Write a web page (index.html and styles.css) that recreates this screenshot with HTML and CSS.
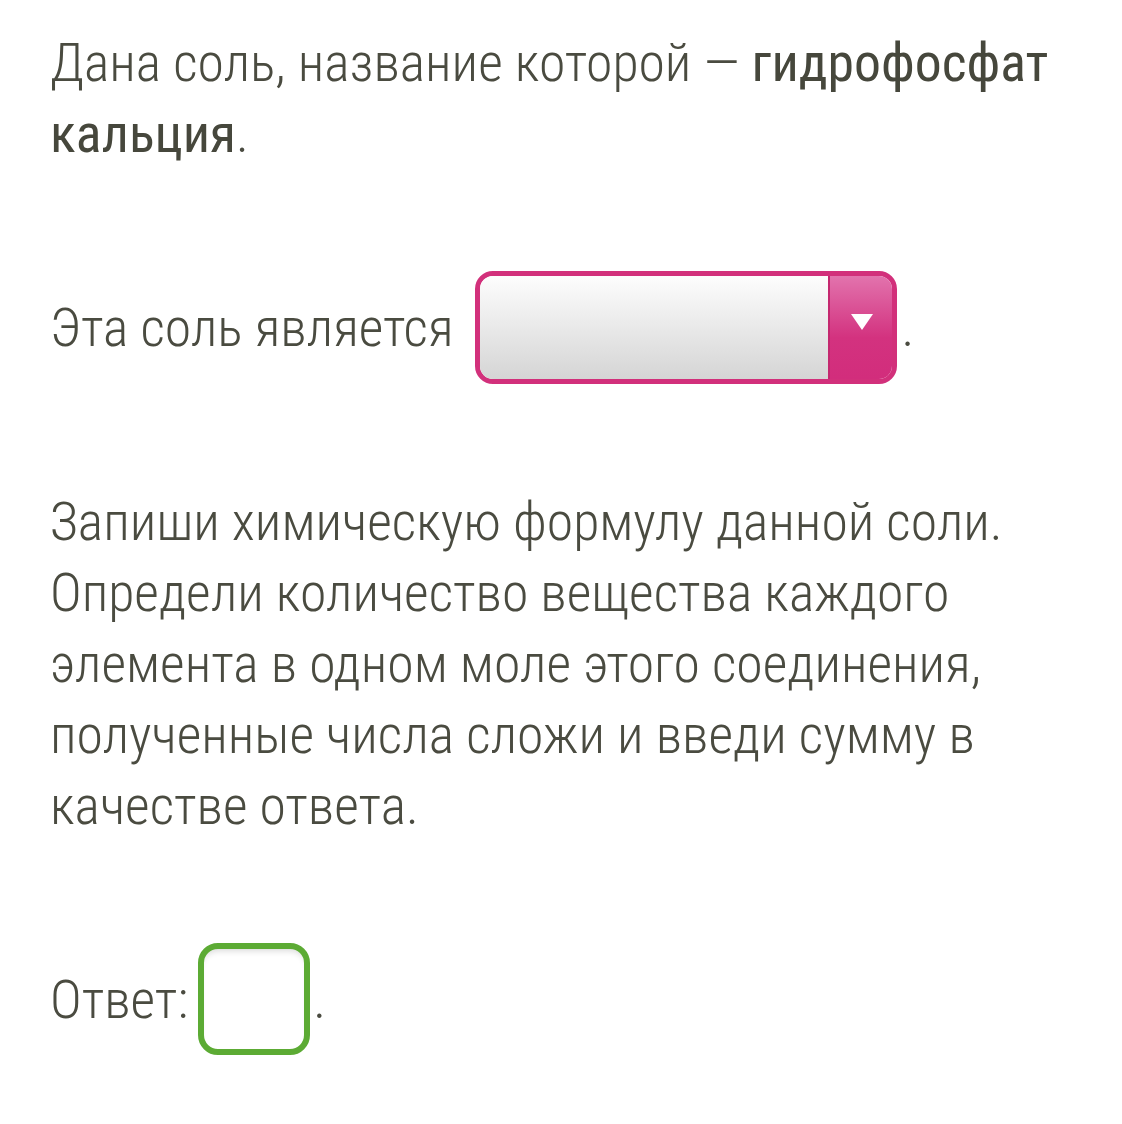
FILE: index.html
```html
<!DOCTYPE html>
<html lang="ru">
<head>
    <meta charset="utf-8" />
    <title>Гидрофосфат кальция</title>
    <link rel="stylesheet" href="styles.css">
</head>
<body>
    <div class="task">
        <p class="txt">Дана соль, название которой — <b>гидрофосфат кальция</b>.</p>

        <p class="txt">Эта соль является<span class="select"><span class="field"></span><span class="arrow"><span class="tri"></span></span></span>.</p>

        <p class="txt">Запиши химическую формулу данной соли. Определи количество вещества каждого элемента в одном моле этого соединения, полученные числа сложи и введи сумму в качестве ответа.</p>

        <p class="txt">Ответ:<span class="answer"></span>.</p>
    </div>
</body>
</html>
```
FILE: styles.css
```css
body,
div,
p,
span {
    margin: 0;
    padding: 0
}

body {
    background: #fff;
    font-family: Roboto, "Liberation Sans", sans-serif;
    color: #4a4b40
}

.task {
    padding: 27px 50px 0 50px
}

.txt {
    font-size: 53.7px;
    font-weight: 300;
    font-stretch: 75%;
    line-height: 71px;
    margin-bottom: 102px
}

.txt b {
    font-weight: 450;
    color: #46473c
}

/* выпадающий список */
.select {
    display: inline-block;
    width: 422px;
    height: 113px;
    box-sizing: border-box;
    margin: 0 5px 0 21px;
    border: 5px solid #d2307b;
    border-radius: 18px;
    overflow: hidden;
    vertical-align: -38px;
    white-space: nowrap
}

.select .field {
    display: inline-block;
    width: 348px;
    height: 100%;
    vertical-align: top;
    background: linear-gradient(#fdfdfd, #d5d5d5)
}

.select .arrow {
    display: inline-block;
    width: 64px;
    height: 100%;
    vertical-align: top;
    border-left: 2px solid #c4286f;
    background: linear-gradient(#e273ad, #d3327f 60%, #d22d7c);
    text-align: center
}

.select .tri {
    display: inline-block;
    margin-top: 38px;
    border-left: 11px solid transparent;
    border-right: 11px solid transparent;
    border-top: 16px solid #fff
}

/* поле ответа */
.answer {
    display: inline-block;
    width: 112px;
    height: 112px;
    box-sizing: border-box;
    margin: 0 3px 0 10px;
    border: 6px solid #5cab34;
    border-radius: 20px;
    box-shadow: inset 0 6px 6px -4px rgba(0,0,0,0.15);
    vertical-align: -37px
}
```
